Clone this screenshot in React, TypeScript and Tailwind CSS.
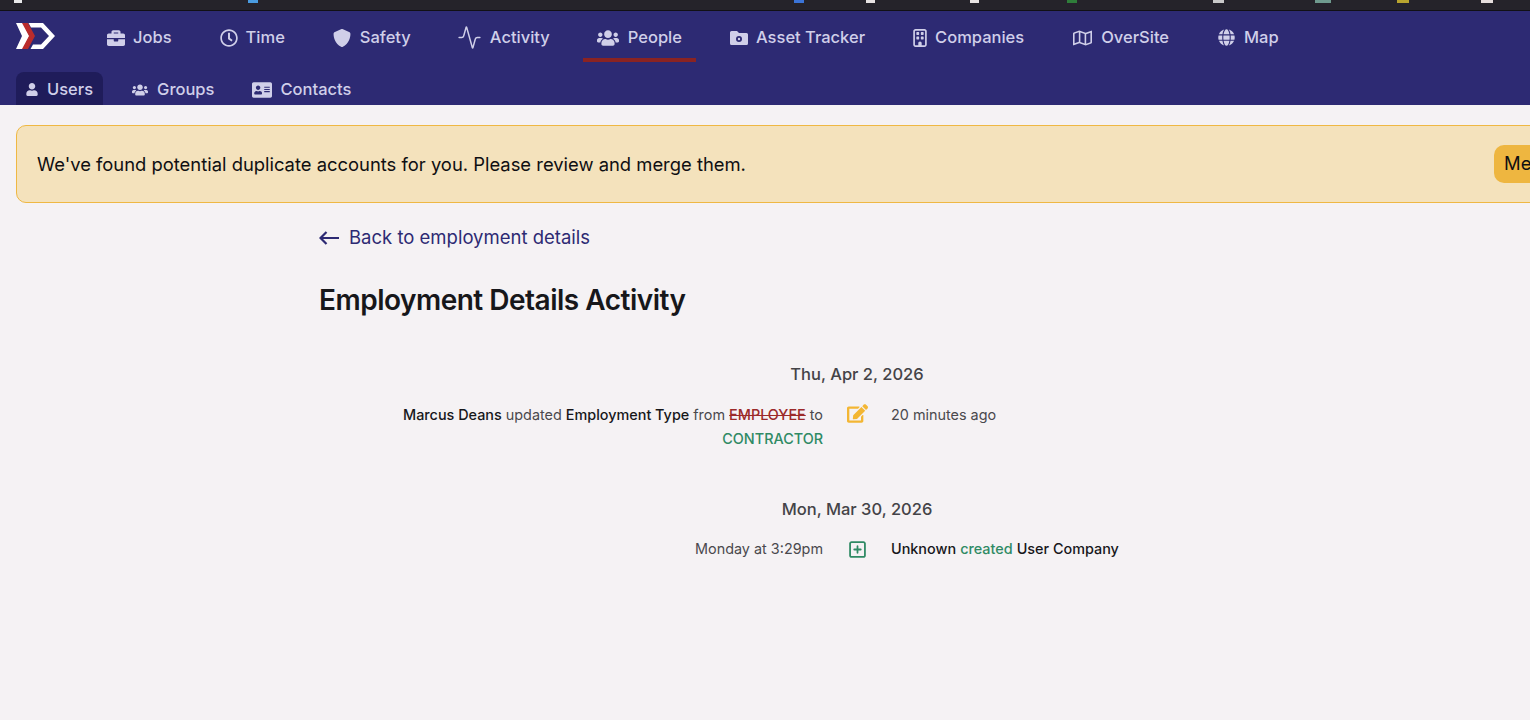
import React from "react";
import { FaBriefcase, FaRegClock, FaUsers, FaRegMap, FaGlobe, FaUser, FaAddressCard, FaEdit } from "react-icons/fa";
import { FaRegBuilding, FaShield, FaRegSquarePlus } from "react-icons/fa6";
import { Activity } from "lucide-react";

function Logo() {
  return (
    <svg width="40" height="28" viewBox="0 0 40 28" className="shrink-0">
      <polygon points="0,1 7,1 13.5,14 7,27 0,27 6,14" fill="#ffffff" />
      <polygon points="6,1 12,1 19,14 12,27 6,27 13,14" fill="#b92c2c" />
      <path d="M12.5 1 H27 L39 14 L27 27 H14.5 L17 22.5 H25 L33 14 L25 5.5 H15 Z" fill="#ffffff" />
    </svg>
  );
}

function FolderGear({ className }: { className?: string }) {
  return (
    <svg viewBox="0 0 18 16" className={className} fill="currentColor">
      <path fillRule="evenodd" d="M1.5 1H7l2 2h7.5A1.5 1.5 0 0 1 18 4.500v9a1.500 1.500 0 0 1-1.500 1.500h-15A1.500 1.500 0 0 1 0 13.500v-11A1.500 1.500 0 0 1 1.500 1ZM9 6a3 3 0 1 0 0 6 3 3 0 0 0 0-6Zm0 1.800a1.200 1.200 0 1 1 0 2.400 1.200 1.200 0 0 1 0-2.400Z" />
    </svg>
  );
}

const mainNav = [
  { label: "Jobs", box: "w-[18px]", item: "", icon: <FaBriefcase className="w-[18px] h-[18px]" /> },
  { label: "Time", box: "w-[18px]", item: "", icon: <FaRegClock className="w-[18px] h-[18px]" /> },
  { label: "Safety", box: "w-[19px]", item: "mr-[-1px]", icon: <FaShield className="w-[18px] h-[18px]" /> },
  { label: "Activity", box: "w-[24px]", item: "mr-[-1px]", icon: <Activity className="w-[25px] h-[25px] shrink-0" strokeWidth={1.4} /> },
  { label: "People", box: "w-[23px]", item: "", icon: <FaUsers className="w-[22px] h-[18px]" />, active: true },
  { label: "Asset Tracker", box: "w-[18px]", item: "", icon: <FolderGear className="w-[18px] h-[16px]" /> },
  { label: "Companies", box: "w-[14px]", item: "", icon: <FaRegBuilding className="w-[14px] h-[18px]" /> },
  { label: "OverSite", box: "w-[21px]", item: "", icon: <FaRegMap className="w-[19px] h-[18px]" /> },
  { label: "Map", box: "w-[19px]", item: "", icon: <FaGlobe className="w-[17px] h-[17px]" /> },
];

const specks = [
  { left: 14, width: 8, color: "#e8e8ea" },
  { left: 248, width: 10, color: "#4a9be0" },
  { left: 794, width: 10, color: "#3b74d8" },
  { left: 866, width: 9, color: "#e8e3e3" },
  { left: 970, width: 9, color: "#e8e3e3" },
  { left: 1067, width: 10, color: "#2f7d3a" },
  { left: 1213, width: 11, color: "#c9c9c9" },
  { left: 1315, width: 16, color: "#6f9a8e" },
  { left: 1397, width: 12, color: "#b8a42f" },
  { left: 1481, width: 12, color: "#e6dede" },
];

export default function App() {
  return (
    <div className="w-[1530px] h-[720px] overflow-hidden bg-[#f5f2f4]">
      <div className="w-[1714px] font-['Inter',sans-serif]">
        <div className="relative h-[11px] bg-[#25232a] border-b border-[#111015]">
          {specks.map((s) => (
            <span key={s.left} className="absolute top-0 h-[3px]" style={{ left: s.left, width: s.width, backgroundColor: s.color }} />
          ))}
        </div>
        <header className="h-[94px] bg-[#2d2a73] text-[#d0cfe9] text-[16.5px] font-medium">
          <div className="h-[51px] flex pl-4">
            <div className="w-[77px] pt-[11px] shrink-0">
              <Logo />
            </div>
            <nav className="flex gap-5">
              {mainNav.map((n) => (
                <a key={n.label} className={`flex items-center gap-2 px-[14px] border-b-4 pt-[6px] ${n.item} ${n.active ? "border-[#8a2323]" : "border-transparent"}`}>
                  <span className={`flex justify-center ${n.box}`}>{n.icon}</span>
                  <span>{n.label}</span>
                </a>
              ))}
            </nav>
          </div>
          <div className="h-[43px] flex items-end pl-4">
            <a className="h-[33px] flex items-center gap-2 pl-[9px] pr-[10px] pt-[2px] rounded-t-lg bg-[#1f1c5a]">
              <FaUser className="w-3 h-[13px] mx-[1px]" />
              <span>Users</span>
            </a>
            <a className="h-[33px] flex items-center gap-[9px] ml-[29px] pt-[2px]">
              <FaUsers className="w-4 h-[14px]" />
              <span>Groups</span>
            </a>
            <a className="h-[33px] flex items-center gap-2 ml-[38px] pt-[2px]">
              <FaAddressCard className="w-[20px] h-[18px]" />
              <span>Contacts</span>
            </a>
          </div>
        </header>

        <main className="px-4 pt-5">
          <div className="h-[78px] flex items-center justify-between pl-5 pr-[127px] rounded-[10px] border border-[#efb843] bg-[#f4e2bc] text-[18.4px] text-[#0f0f12]">
            <span className="pt-[1px]">We've found potential duplicate accounts for you. Please review and merge them.</span>
            <button className="h-[38px] px-[10px] rounded-[10px] bg-[#eeb640]">Merge</button>
          </div>

          <div className="w-[1076px] mx-auto">
            <a className="flex items-center gap-[10px] mt-[23px] h-6 text-[18.5px] text-[#2d2a73]">
              <svg width="20" height="14" viewBox="0 0 20 14" fill="none" stroke="currentColor" strokeWidth="2.2">
                <path d="M1.500 7H20M7.500 1 1.500 7l6 6" />
              </svg>
              <span>Back to employment details</span>
            </a>
            <h1 className="mt-[32px] text-[28px] leading-9 font-semibold tracking-[-0.5px] text-[#17171a]">Employment Details Activity</h1>

            <div className="mt-[44px] text-center text-[#444347] text-[16.5px] font-medium leading-6">Thu, Apr 2, 2026</div>
            <div className="mt-[17px] grid grid-cols-[1fr_68px_1fr] text-[14.4px] leading-6 text-[#4a494d]">
              <div className="text-right">
                <span className="font-medium text-[#17171a]">Marcus Deans</span> updated <span className="font-medium text-[#17171a]">Employment Type</span> from <span className="font-medium text-[#9c2a2a] line-through">EMPLOYEE</span> to <span className="font-medium text-[#2f8a64]">CONTRACTOR</span>
              </div>
              <div className="flex justify-center pt-[1px]">
                <FaEdit className="w-[21px] h-[19px] text-[#f3b633]" />
              </div>
              <div>20 minutes ago</div>
            </div>

            <div className="mt-[46px] text-center text-[#444347] text-[16.5px] font-medium leading-6">Mon, Mar 30, 2026</div>
            <div className="mt-[16px] grid grid-cols-[1fr_68px_1fr] text-[14.4px] leading-6 text-[#4a494d]">
              <div className="text-right">Monday at 3:29pm</div>
              <div className="flex justify-center items-center">
                <FaRegSquarePlus className="w-[17px] h-[19px] text-[#2f8a64]" />
              </div>
              <div>
                <span className="font-medium text-[#17171a]">Unknown</span> <span className="font-medium text-[#2f8a64]">created</span> <span className="font-medium text-[#17171a]">User Company</span>
              </div>
            </div>
          </div>
        </main>
      </div>
    </div>
  );
}
